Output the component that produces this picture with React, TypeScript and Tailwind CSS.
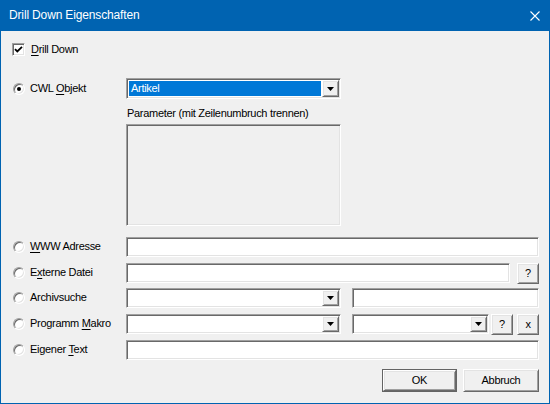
import React from 'react';

const sunken =
  'border border-t-[#a0a0a0] border-l-[#a0a0a0] border-r-white border-b-white shadow-[inset_1px_1px_0_#696969,inset_-1px_-1px_0_#e3e3e3]';
const raised =
  'border border-t-white border-l-white border-r-[#696969] border-b-[#696969] shadow-[inset_1px_1px_0_#e3e3e3,inset_-1px_-1px_0_#a0a0a0] bg-[#f0f0f0]';

function Key({ children }: { children: React.ReactNode }) {
  return <span className="underline underline-offset-[2px] decoration-1">{children}</span>;
}

function Radio({ checked = false }: { checked?: boolean }) {
  return (
    <span className="w-[12px] h-[12px] rounded-full border border-t-[#a0a0a0] border-l-[#a0a0a0] border-r-white border-b-white bg-white shadow-[inset_1px_1px_0_#696969,inset_-1px_-1px_0_#e3e3e3] flex items-center justify-center shrink-0">
      {checked && <span className="w-[4px] h-[4px] rounded-full bg-black" />}
    </span>
  );
}

function Arrow() {
  return (
    <svg width="7" height="4" viewBox="0 0 7 4">
      <path d="M0 0h7L3.5 4z" fill="#000" />
    </svg>
  );
}

function Combo({ width, children }: { width: string; children?: React.ReactNode }) {
  return (
    <div className={`${width} h-full ${sunken} bg-white flex p-[1px]`}>
      <div className="flex-1 flex items-stretch min-w-0">{children}</div>
      <div className={`w-[17px] ${raised} flex items-center justify-center`}>
        <Arrow />
      </div>
    </div>
  );
}

function Field({ className = '' }: { className?: string }) {
  return <div className={`h-full ${sunken} bg-white ${className}`} />;
}

function SmallButton({ label }: { label: string }) {
  return (
    <div className={`w-[22px] h-[21px] ${raised} flex items-center justify-center shrink-0`}>
      {label}
    </div>
  );
}

function OptionLabel({ checked, children }: { checked?: boolean; children: React.ReactNode }) {
  return (
    <div className="w-[114px] shrink-0 flex items-center">
      <span className="w-[14px] flex justify-center">
        <Radio checked={checked} />
      </span>
      <span className="ml-[4px] pb-[1px]">{children}</span>
    </div>
  );
}

export default function App() {
  return (
    <div className="w-[550px] h-[404px] bg-[#f0f0f0] border border-t-0 border-[#0063b1] flex flex-col overflow-hidden text-black text-[11px] tracking-[-0.3px] font-['Liberation_Sans',Arial,sans-serif] leading-none">
      {/* Title bar */}
      <div className="h-[31px] bg-[#0063b1] text-white flex items-center justify-between pl-[9px] pr-[9px] shrink-0 -mx-[1px]">
        <span className="text-[12px] tracking-[-0.15px] pb-[1px]">Drill Down Eigenschaften</span>
        <svg width="10" height="10" viewBox="0 0 10 10" className="mr-[1px]">
          <path d="M0.5 0.5l9 9M9.5 0.5l-9 9" stroke="#fff" strokeWidth="1.1" />
        </svg>
      </div>

      <div className="flex flex-col pl-[11px] pr-[10px]">
        {/* Drill Down checkbox */}
        <div className="mt-[12px] h-[13px] flex items-center">
          <span className={`w-[13px] h-[13px] ${sunken} bg-white flex items-center justify-center`}>
            <svg width="9" height="9" viewBox="0 0 9 9">
              <path d="M1 4.2l2.3 2.3L8 1.8" stroke="#000" strokeWidth="1.8" fill="none" />
            </svg>
          </span>
          <span className="ml-[6px]">
            <Key>D</Key>rill Down
          </span>
        </div>

        {/* CWL Objekt */}
        <div className="mt-[22px] h-[21px] flex">
          <OptionLabel checked>
            CWL <Key>O</Key>bjekt
          </OptionLabel>
          <Combo width="w-[215px]">
            <div className="flex-1 m-[1px] bg-[#0078d7] text-white flex items-center pl-[2px]">Artikel</div>
          </Combo>
        </div>

        <div className="mt-[9px] h-[12px] pl-[115px]">Parameter (mit Zeilenumbruch trennen)</div>
        <div className="mt-[4px] ml-[114px] w-[215px] h-[102px] bg-[#f0f0f0] shrink-0">
          <div className={`w-full h-full ${sunken}`} />
        </div>

        {/* WWW Adresse */}
        <div className="mt-[11px] h-[20px] flex">
          <OptionLabel>
            <Key>W</Key>WW Adresse
          </OptionLabel>
          <Field className="flex-1" />
        </div>

        {/* Externe Datei */}
        <div className="mt-[6px] h-[20px] flex items-center">
          <OptionLabel>
            E<Key>x</Key>terne Datei
          </OptionLabel>
          <Field className="flex-1" />
          <span className="w-[7px]" />
          <SmallButton label="?" />
        </div>

        {/* Archivsuche */}
        <div className="mt-[5px] h-[20px] flex">
          <OptionLabel>Archivsuche</OptionLabel>
          <Combo width="w-[215px]" />
          <span className="w-[11px]" />
          <Field className="flex-1" />
        </div>

        {/* Programm Makro */}
        <div className="mt-[6px] h-[20px] flex items-center">
          <OptionLabel>
            Programm <Key>M</Key>akro
          </OptionLabel>
          <Combo width="w-[215px]" />
          <span className="w-[11px]" />
          <Combo width="w-[137px]" />
          <span className="w-[2px]" />
          <SmallButton label="?" />
          <span className="w-[4px]" />
          <SmallButton label="x" />
        </div>

        {/* Eigener Text */}
        <div className="mt-[6px] h-[20px] flex">
          <OptionLabel>
            Eigener <Key>T</Key>ext
          </OptionLabel>
          <Field className="flex-1" />
        </div>

        {/* Buttons */}
        <div className="mt-[9px] h-[23px] flex justify-end gap-[6px]">
          <div className="w-[75px] h-full border border-[#646464] flex">
            <div className={`flex-1 ${raised} border-t-white flex items-center justify-center`}>OK</div>
          </div>
          <div className={`w-[76px] h-full ${raised} flex items-center justify-center`}>Abbruch</div>
        </div>
      </div>
    </div>
  );
}
